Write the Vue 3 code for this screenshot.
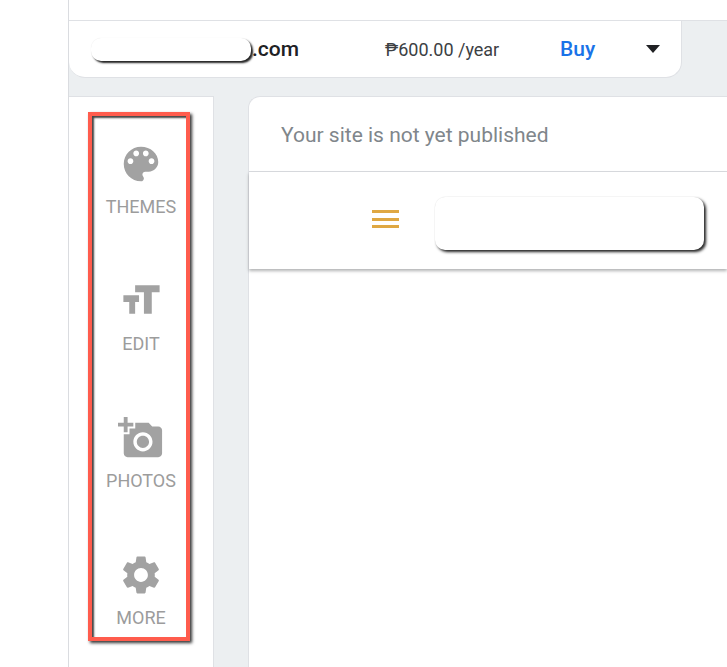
<script setup>
const tools = [
  { label: 'THEMES', vb: '0 0 24 24', d: 'M12 3c-4.97 0-9 4.03-9 9s4.03 9 9 9c.83 0 1.5-.67 1.5-1.5 0-.39-.15-.74-.39-1.01-.23-.26-.38-.61-.38-.99 0-.83.67-1.5 1.5-1.5H16c2.76 0 5-2.24 5-5 0-4.42-4.03-8-9-8zm-5.5 9c-.83 0-1.5-.67-1.5-1.5S5.67 9 6.5 9 8 9.67 8 10.5 7.33 12 6.5 12zm3-4C8.67 8 8 7.33 8 6.5S8.67 5 9.5 5s1.5.67 1.5 1.5S10.33 8 9.5 8zm5 0c-.83 0-1.5-.67-1.5-1.5S13.67 5 14.5 5s1.5.67 1.5 1.5S15.33 8 14.5 8zm3 4c-.83 0-1.5-.67-1.5-1.5S16.67 9 17.5 9s1.5.67 1.5 1.5-.67 1.5-1.5 1.5z' },
  { label: 'EDIT', vb: '0 0 47 47', d: 'M17.5 7.5H42.5V14.5H34.5V36.5H26.5V14.5H17.5z M5.5 17.5H21.5V24.5H17.5V36.5H11.5V24.5H5.5z' },
  { label: 'PHOTOS', vb: '0 0 24 24', d: 'M3 4V1h2v3h3v2H5v3H3V6H0V4h3zm3 6V7h3V4h7l1.83 2H21c1.1 0 2 .9 2 2v12c0 1.1-.9 2-2 2H5c-1.1 0-2-.9-2-2V10h3zm7 9c2.76 0 5-2.24 5-5s-2.24-5-5-5-5 2.24-5 5 2.24 5 5 5zm-3.2-5c0 1.77 1.43 3.2 3.2 3.2s3.2-1.43 3.2-3.2-1.43-3.2-3.2-3.2-3.2 1.43-3.2 3.2z' },
  { label: 'MORE', vb: '0 0 24 24', d: 'M19.14 12.94c.04-.3.06-.61.06-.94 0-.32-.02-.64-.07-.94l2.03-1.58c.18-.14.23-.41.12-.61l-1.92-3.32c-.12-.22-.37-.29-.59-.22l-2.39.96c-.5-.38-1.03-.7-1.62-.94L14.4 2.81c-.04-.24-.24-.41-.48-.41h-3.84c-.24 0-.43.17-.47.41L9.25 5.35c-.59.24-1.13.57-1.62.94L5.24 5.33c-.22-.08-.47 0-.59.22L2.74 8.87c-.12.21-.08.47.12.61l2.03 1.58c-.05.3-.09.63-.09.94s.02.64.07.94l-2.03 1.58c-.18.14-.23.41-.12.61l1.92 3.32c.12.22.37.29.59.22l2.39-.96c.5.38 1.03.7 1.62.94l.36 2.54c.05.24.24.41.48.41h3.84c.24 0 .44-.17.47-.41l.36-2.54c.59-.24 1.13-.56 1.62-.94l2.39.96c.22.08.47 0 .59-.22l1.92-3.32c.12-.22.07-.47-.12-.61l-2.01-1.58zM12 15.6c-1.98 0-3.6-1.62-3.6-3.6s1.62-3.6 3.6-3.6 3.6 1.62 3.6 3.6-1.62 3.6-3.6 3.6z' }
]
</script>

<template>
  <div class="page">
    <div class="gutter"></div>
    <div class="workspace">
      <div class="topbar"></div>
      <div class="domain-row">
        <div class="domain">
          <span class="redact-name"></span>
          <span class="tld">.com</span>
        </div>
        <span class="price">₱600.00 /year</span>
        <span class="buy">Buy</span>
        <span class="caret"></span>
      </div>
      <div class="body">
        <aside class="sidebar">
          <div class="marker"></div>
          <div v-for="t in tools" :key="t.label" class="tool">
            <svg class="tool-icon" :viewBox="t.vb" width="46" height="46" fill="#a2a2a2">
              <path :d="t.d" />
            </svg>
            <span class="tool-label">{{ t.label }}</span>
          </div>
        </aside>
        <main class="main">
          <div class="status">Your site is not yet published</div>
          <div class="nav">
            <div class="burger"><i></i><i></i><i></i></div>
            <div class="redact-title"></div>
          </div>
        </main>
      </div>
    </div>
  </div>
</template>

<style>
html, body { margin: 0; background: #fff; }
</style>

<style scoped>
.page {
  width: 727px;
  height: 667px;
  overflow: hidden;
  display: flex;
  font-family: Roboto, "Liberation Sans", sans-serif;
  background: #fff;
}
.gutter {
  width: 68px;
  flex: none;
  background: #fff;
  border-right: 1px solid #dadce0;
}
.workspace {
  flex: 1;
  min-width: 0;
  display: flex;
  flex-direction: column;
  background: #eceff1;
}
.topbar {
  height: 20px;
  background: #fff;
  border-bottom: 1px solid #dfe1e5;
}
.domain-row {
  width: 613px;
  height: 57px;
  box-sizing: border-box;
  display: flex;
  align-items: center;
  background: #fff;
  border-bottom: 1px solid #dfe1e5;
  border-right: 1px solid #dfe1e5;
  border-radius: 0 0 16px 16px;
  padding-left: 22px;
}
.domain {
  width: 294px;
  display: flex;
  align-items: center;
}
.redact-name {
  width: 160px;
  height: 23px;
  margin-right: 1px;
  background: #fff;
  border-radius: 10px;
  box-shadow: 2px 2px 2px #222, 0 0 1px #e4e4e4;
}
.tld {
  font-size: 21px;
  font-weight: 500;
  color: #202124;
}
.price {
  width: 175px;
  font-size: 18px;
  color: #3c4043;
}
.buy {
  width: 86px;
  font-size: 21px;
  font-weight: 500;
  color: #1a73e8;
}
.caret {
  width: 0;
  height: 0;
  border-left: 7.5px solid transparent;
  border-right: 7.5px solid transparent;
  border-top: 8px solid #202124;
}
.body {
  flex: 1;
  display: flex;
  margin-top: 18px;
  min-height: 0;
}
.sidebar {
  position: relative;
  width: 144px;
  flex: none;
  padding-top: 44px;
  background: #fff;
  border-top: 1px solid #dfe1e5;
  border-right: 1px solid #dfe1e5;
}
.marker {
  position: absolute;
  left: 19px;
  top: 15px;
  width: 102px;
  height: 529px;
  box-sizing: border-box;
  border: 4px solid #ff5c4d;
  box-shadow: 2px 2px 3px #333, inset 2px 2px 2px #444;
}
.tool {
  height: 137px;
  display: flex;
  flex-direction: column;
  align-items: center;
}
.tool-icon {
  display: block;
  flex: none;
}
.tool-label {
  margin-top: 8px;
  font-size: 18px;
  line-height: 24px;
  color: #9c9c9c;
}
.main {
  flex: 1;
  margin-left: 34px;
  background: #fff;
  border-top: 1px solid #dfe1e5;
  border-left: 1px solid #dfe1e5;
  border-top-left-radius: 12px;
}
.status {
  height: 75px;
  box-sizing: border-box;
  padding: 1px 0 0 32px;
  display: flex;
  align-items: center;
  font-size: 21px;
  color: #80868b;
  border-bottom: 1px solid #dadce0;
}
.nav {
  height: 97px;
  display: flex;
  align-items: center;
  padding-left: 123px;
  box-shadow: 0 2px 3px rgba(60, 64, 67, 0.4);
}
.burger {
  width: 27px;
  display: flex;
  flex-direction: column;
  gap: 4.5px;
  margin-right: 36px;
  margin-bottom: 3px;
}
.burger i {
  display: block;
  height: 3px;
  background: #dfa843;
}
.redact-title {
  width: 269px;
  height: 53px;
  margin-top: 6px;
  background: #fff;
  border-radius: 10px;
  box-shadow: 2px 2px 3px #222, 0 0 1px #e4e4e4;
}
</style>
